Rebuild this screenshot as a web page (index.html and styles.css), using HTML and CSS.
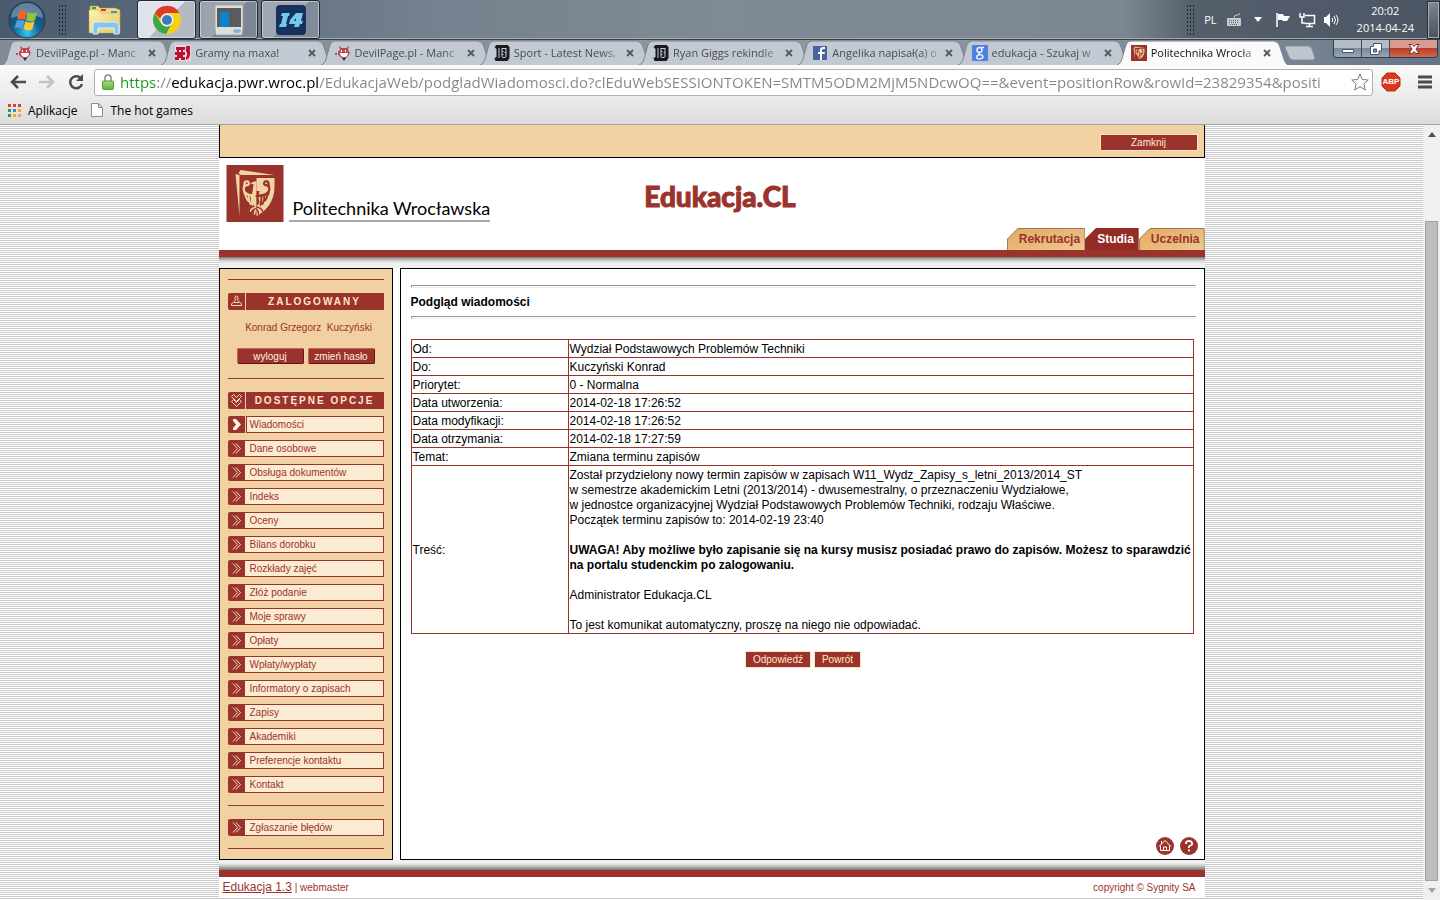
FILE: index.html
```html
<!DOCTYPE html>
<html lang="pl">
<head>
<meta charset="utf-8">
<title>Politechnika Wrocławska</title>
<link rel="stylesheet" href="styles.css">
</head>
<body>
<svg class="defs" aria-hidden="true">
  <defs>
    <linearGradient id="folder" x1="0" y1="0" x2="1" y2="1"><stop offset="0" stop-color="#fdf3b4"/><stop offset="1" stop-color="#e5c76a"/></linearGradient>
    <radialGradient id="orb" cx=".5" cy=".85" r=".8"><stop offset="0" stop-color="#37c8f4"/><stop offset=".45" stop-color="#156395"/><stop offset="1" stop-color="#1d405c"/></radialGradient>
    <linearGradient id="lock" x1="0" y1="0" x2="0" y2="1"><stop offset="0" stop-color="#a5dd80"/><stop offset="1" stop-color="#5fb63c"/></linearGradient>
    <linearGradient id="sand" x1="0" y1="0" x2="1" y2="1"><stop offset="0" stop-color="#e3a863"/><stop offset=".6" stop-color="#eabb7c"/><stop offset="1" stop-color="#efca94"/></linearGradient>
    <g id="wing" fill="none" stroke-linecap="round">
      <path d="M19 21q-2-3 0-4.500 3-1 3.500 2-.5 2-2 1.500" stroke-width="2.200"/>
      <path d="M18 20q-2 5 1 8 4 3 11 3" stroke-width="2.200"/>
      <path d="M17.500 25q0 4 2 6M19 28q0 5 3 8M22 30q0 5 2 9M25 31q0 4 1 9" stroke-width="1.900"/>
      <path d="M30 42q-5 1-6 4M30 44q-2 2-2 5" stroke-width="1.600"/>
    </g>
  </defs>
  <symbol id="tabshape" viewBox="0 0 172 25" preserveAspectRatio="none"><path d="M0 25C3 24 4 22 5 19L9 5Q10 1 14 1H157Q161 1 163 5L168 20Q169 24 172 25" stroke="#7c858e" stroke-width="1"/></symbol>
  <symbol id="devil" viewBox="0 0 16 16"><path d="M5 5L4 1l3 2h4l3-2-1 4q2.500 2 1 5l-3 3-2 2-2-2q-4-2-4-4-.5-3 2-4zM0 8h2v2H0z" fill="#bf4655"/><path d="M5 8h8q0 3-3 4H8Q5 11 5 8M6 5h1v2H6zm4 0h1v2h-1z" fill="#fff"/><path d="M7 13h4l-2 3z" fill="#333"/></symbol>
  <symbol id="gry" viewBox="0 0 16 16"><path d="M0 0h16v16H0z" fill="#f0d5dc"/><path fill-rule="evenodd" d="M1 2h9v3H8v2h2v3H8v2h2v3H6v-2H4v2H0v-3h2v-2H0V7h2V5H1zm3 3v2h2V5zm7-4h4v9l-1 3-3 2v-3l1-1V7h-1z" fill="#ba0f35"/></symbol>
  <symbol id="sport" viewBox="0 0 15 16"><path d="M2 0h11l2 2v11l-2 3H1l-1-3 2-1V4L0 2z" fill="#17191d"/><path d="M4 3h1v10H4zm3 0h5v1H7zm0 1h1v8H7zm4 0h1v8h-1zM8 12h3v1H8zm0-6h1v1H8zm2 1h1v1h-1zM8 9h1v1H8z" fill="#c8ced7"/></symbol>
  <symbol id="crest" viewBox="0 0 57 57"><path d="M0 0h57v57H0z" fill="#9b332d"/><path d="M14 5l34 5H14l-2-2zM9 9l4 1v41z" fill="#f2d4a3"/><path d="M30 13h18v10q-1 19-18 28z" fill="#f2d4a3"/><use href="#wing" stroke="#f2d4a3"/><path d="M30 16l-4 1-2 2h3l-1 8-1 3 1 8 4 6z" fill="#f2d4a3"/><g transform="translate(60 0) scale(-1 1)"><use href="#wing" stroke="#9b332d"/><path d="M30 26h-3l1 6-1 6 3 3z" fill="#9b332d"/></g></symbol>
  <symbol id="cross" viewBox="0 0 8 8"><path d="M1 1l6 6M7 1L1 7" stroke="#55585c" stroke-width="1.800" fill="none"/></symbol>
  <symbol id="chevrons" viewBox="0 0 17 17"><path d="M5 3.500l4.500 5L5 13.500M8 3.500l4.500 5L8 13.500" fill="none" stroke="#f8ddb9"/></symbol>
</svg>

<header class="taskbar">
  <button class="start" aria-label="Start"><svg width="38" height="38" viewBox="0 0 38 38"><circle cx="19" cy="19" r="18" fill="url(#orb)" stroke="#263c50"/><path d="M3 17a16 15 0 0132 0q-15-6-32 0" fill="#9eb4c3" opacity=".55"/><path d="M11 11q4-3 8 0l-2 8q-4-2-8 0z" fill="#f1632b"/><path d="M20 11q4 3 9 0l-2 8q-4 3-9 0z" fill="#91c63e"/><path d="M8.500 20q4-2 8 0l-2 8q-4-3-8 0z" fill="#4da0dc"/><path d="M17.500 20q4 3 9 0l-2 8q-4 3-9 0z" fill="#fac832"/></svg></button>
  <i class="grip"></i>
  <button class="task bare" aria-label="Eksplorator"><svg width="34" height="30" viewBox="0 0 34 30"><path d="M2 1h8l2 2h15l5 2v5H2z" fill="#f2dc83" stroke="#b9983c" stroke-width=".5"/><path d="M4 2h4v2H4z" fill="#21a641"/><path d="M13 4h5v2h-5z" fill="#d53a28"/><path d="M23 6h6v2h-6z" fill="#2d8fe0"/><path d="M1 5h9l3 3h19v20H1z" fill="url(#folder)" stroke="#c3a344" stroke-width=".5"/><path d="M5 29V20q0-3 3-3h19q4 0 4 3v9h-5v-6H10v6z" fill="#83c8ec" stroke="#d8f3ff"/></svg></button>
  <button class="task active" aria-label="Google Chrome"><svg width="30" height="30" viewBox="0 0 30 30"><circle cx="15" cy="15" r="14" fill="#f7cf18"/><path d="M2.900 8A14 14 0 0127.300 8H15a7 7 0 00-6.800 6z" fill="#dc3b2c"/><path d="M2.900 8A14 14 0 0014 29l5-9a7 7 0 01-10.500-2.500z" fill="#3fa648"/><circle cx="15" cy="15" r="6.500" fill="#f3f3f3"/><circle cx="15" cy="15" r="5" fill="#3b7bc6"/></svg></button>
  <button class="task" aria-label="Monitor"><svg width="30" height="32" viewBox="0 0 30 32"><path d="M1 1h28v24l-1 6H2l-1-6z" fill="#dcdfda" stroke="#a1a5a3"/><path d="M3 4h24v19H3z" fill="#5b5b5b"/><path d="M6 8h9v15H6z" fill="#0b83d0"/><ellipse cx="23" cy="27" rx="4" ry="2" fill="#8fb3d1"/></svg></button>
  <button class="task" aria-label="I4"><svg width="30" height="30" viewBox="0 0 30 30"><rect width="30" height="30" rx="4" fill="#17305c"/><path d="M6 8h8l-1 3h-1l-2 8h1l-1 3H3l1-3h1l2-8H5z" fill="#70cbee"/><path fill-rule="evenodd" d="M20 8h7l-2 8h2l-1 3h-2l-1 3h-5l1-3h-6l1-4zm0 5l-2 3h2z" fill="#70cbee"/></svg></button>
  <div class="tray">
    <i class="grip"></i>
    <span class="lang">PL</span>
    <svg width="16" height="16" viewBox="0 0 16 16"><path d="M8 6q0-3 3-3t3-2" stroke="#ccc" fill="none"/><rect x="1" y="6" width="14" height="8" rx="1" fill="#c9cbcd"/><path d="M3 8.500h10M3 10.500h10M4 12.500h8" stroke="#555e69" stroke-dasharray="1 1"/></svg>
    <svg class="down" width="8" height="5" viewBox="0 0 8 5"><path d="M0 0h8L4 5z" fill="#fff"/></svg>
    <svg width="16" height="16" viewBox="0 0 16 16"><path d="M2 1v14" stroke="#fff" stroke-width="1.500"/><path d="M3 2h5l1 2h6l-3 5H8L7 8H3z" fill="#fff"/></svg>
    <svg class="net" width="17" height="16" viewBox="0 0 17 16"><path d="M6 3.500h9.500v8H6M7 14.500h7M10.500 12v2M1 1v4h4V1M3 5v6h3" stroke="#fff" stroke-width="1.500" fill="none"/></svg>
    <svg class="sound" width="16" height="16" viewBox="0 0 16 16"><path d="M1 5h2l4-4v14l-4-4H1z" fill="#fff"/><path d="M9 6q1.500 2 0 4m2-6q3 4 0 8m2-9q4 5 0 10" stroke="#fff" fill="none"/></svg>
    <time class="clock">20:02<br>2014-04-24</time>
    <button class="desktop" aria-label="Pokaż pulpit"></button>
  </div>
</header>

<nav class="tabs" aria-label="Karty">
  <div class="tab"><svg class="shape"><use href="#tabshape"/></svg><svg class="fav"><use href="#devil"/></svg><span>DevilPage.pl - Manc</span><button aria-label="Zamknij kartę"><svg><use href="#cross"/></svg></button></div>
  <div class="tab"><svg class="shape"><use href="#tabshape"/></svg><svg class="fav"><use href="#gry"/></svg><span>Gramy na maxa!</span><button aria-label="Zamknij kartę"><svg><use href="#cross"/></svg></button></div>
  <div class="tab"><svg class="shape"><use href="#tabshape"/></svg><svg class="fav"><use href="#devil"/></svg><span>DevilPage.pl - Manc</span><button aria-label="Zamknij kartę"><svg><use href="#cross"/></svg></button></div>
  <div class="tab"><svg class="shape"><use href="#tabshape"/></svg><svg class="fav"><use href="#sport"/></svg><span>Sport - Latest News,</span><button aria-label="Zamknij kartę"><svg><use href="#cross"/></svg></button></div>
  <div class="tab"><svg class="shape"><use href="#tabshape"/></svg><svg class="fav"><use href="#sport"/></svg><span>Ryan Giggs rekindle</span><button aria-label="Zamknij kartę"><svg><use href="#cross"/></svg></button></div>
  <div class="tab"><svg class="shape"><use href="#tabshape"/></svg><svg class="fav" viewBox="0 0 16 16"><path d="M1 1h14v14H1z" fill="#4862a3"/><path d="M8 15V9H6V7h2V5q0-3 3-3h2v2h-1q-2 0-2 1v2h3l-.5 2H10v6z" fill="#fff"/></svg><span>Angelika napisał(a) o</span><button aria-label="Zamknij kartę"><svg><use href="#cross"/></svg></button></div>
  <div class="tab"><svg class="shape"><use href="#tabshape"/></svg><svg class="fav" viewBox="0 0 16 16"><rect width="16" height="16" rx="1" fill="#4a81e0"/><g fill="none" stroke="#e8effb" stroke-width="1.500"><circle cx="7.500" cy="5" r="2.500"/><path d="M9 2.500h3M8 7.500q-2 1 0 2 3 .5 3 2.300T7.700 14t-3-2T8 9.800"/></g></svg><span>edukacja - Szukaj w</span><button aria-label="Zamknij kartę"><svg><use href="#cross"/></svg></button></div>
  <div class="tab current"><svg class="shape"><use href="#tabshape"/></svg><svg class="fav"><use href="#crest"/></svg><span>Politechnika Wrocła</span><button aria-label="Zamknij kartę"><svg><use href="#cross"/></svg></button></div>
  <div class="tabend">
    <button class="newtab" aria-label="Nowa karta"><svg width="32" height="16" viewBox="0 0 32 16"><path d="M3 1h21q3 0 4 3l3 9q0 2-2 2H9q-3 0-4-3L1 3q0-2 2-2z" fill="#bdc5ce" stroke="#858e98"/></svg></button>
    <div class="wincontrols">
      <button aria-label="Minimalizuj"><svg width="14" height="12" viewBox="0 0 14 12"><path d="M1.500 6.500h11v3h-11z" fill="#fff" stroke="#4d5765"/></svg></button>
      <button aria-label="Przywróć"><svg width="12" height="12" viewBox="0 0 12 12"><path d="M3.500.5h8V8H9v3.500H.5V3.500h3zM3.500 6v3h3V6z" fill="#fff" stroke="#4d5765" fill-rule="evenodd"/></svg></button>
      <button class="close" aria-label="Zamknij okno"><svg width="12" height="10" viewBox="0 0 12 10"><path d="M1 .5h3l2 2 2-2h3L8 5l3 4.500H8l-2-2-2 2H1L4 5z" fill="#fff" stroke="#6b3530"/></svg></button>
    </div>
  </div>
</nav>

<div class="toolbar">
  <button aria-label="Wstecz"><svg width="16" height="14" viewBox="0 0 16 14"><path d="M8 1L2 7l6 6M2 7h14" stroke="#4b4b4b" stroke-width="2.500" fill="none"/></svg></button>
  <button aria-label="Dalej"><svg width="16" height="14" viewBox="0 0 16 14"><path d="M8 1l6 6-6 6M14 7H0" stroke="#c3c3c3" stroke-width="2.500" fill="none"/></svg></button>
  <button aria-label="Odśwież"><svg width="16" height="16" viewBox="0 0 16 16"><path d="M12.500 4A6 6 0 1014 10" stroke="#4b4b4b" stroke-width="2.500" fill="none"/><path d="M15 0v7H8z" fill="#4b4b4b"/></svg></button>
  <div class="omnibox">
    <svg width="12" height="16" viewBox="0 0 12 16"><path d="M3 8V4q0-3 3-3t3 3v4" stroke="#8a8a8a" stroke-width="1.500" fill="none"/><rect x=".5" y="7" width="11" height="8.500" rx="1" fill="url(#lock)" stroke="#4f9a35"/></svg>
    <input type="text" aria-label="Adres" value="https://edukacja.pwr.wroc.pl/EdukacjaWeb/podgladWiadomosci.do?clEduWebSESSIONTOKEN=SMTM5ODM2MjM5NDcwOQ==&amp;event=positionRow&amp;rowId=23829354&amp;positi">
    <button aria-label="Dodaj do zakładek"><svg width="18" height="18" viewBox="0 0 18 18"><path d="M9 1l2.300 5.500 6 .5-4.500 4 1.400 6L9 13.700 3.800 17l1.400-6L.7 7l6-.5z" fill="#fff" stroke="#777"/></svg></button>
  </div>
  <button class="abp" aria-label="Adblock Plus"><svg width="20" height="20" viewBox="0 0 20 20"><path d="M6 1h8l5 5v8l-5 5H6l-5-5V6z" fill="#d93a1c" stroke="#b92c12"/></svg><b>ABP</b></button>
  <button aria-label="Menu"><svg width="14" height="14" viewBox="0 0 14 14"><path d="M0 2h14M0 7h14M0 12h14" stroke="#4b4b4b" stroke-width="3"/></svg></button>
</div>
<nav class="bookmarks" aria-label="Zakładki">
  <a href="#"><svg width="13" height="13" viewBox="0 0 13 13"><path d="M0 0h3v3H0zm5 0h3v3H5zm5 0h3v3h-3z" fill="#e33e2b"/><path d="M0 5h3v3H0z" fill="#2c9c4a"/><path d="M5 5h3v3H5z" fill="#2a84f2"/><path d="M10 5h3v3h-3zm-5 5h3v3H5zm5 0h3v3h-3z" fill="#f3ad13"/><path d="M0 10h3v3H0z" fill="#2c9c4a"/></svg>Aplikacje</a>
  <a href="#"><svg width="12" height="14" viewBox="0 0 12 14"><path d="M.5.5h7l4 4v9H.5zM7.500.5v4h4" fill="#fff" stroke="#8d8d8d"/></svg>The hot games</a>
</nav>

<div class="viewport">
  <div class="canvas">
    <div class="page">
      <div class="topbar"><button class="btn wide">Zamknij</button></div>
      <div class="masthead">
        <div class="logo"><svg width="58" height="57"><use href="#crest"/></svg><span>Politechnika Wrocławska</span></div>
        <h1>Edukacja.CL</h1>
        <nav class="sections" aria-label="Sekcje">
          <a href="#" class="section"><svg viewBox="0 0 80 22" preserveAspectRatio="none"><path d="M.5 22V11L11 .5h68.500V22" fill="url(#sand)" stroke="#9c7c50"/></svg><span>Rekrutacja</span></a>
          <a href="#" class="section on"><svg viewBox="0 0 54 22" preserveAspectRatio="none"><path d="M0 22V11L11 0h43v22" fill="#922c24"/></svg><span>Studia</span></a>
          <a href="#" class="section"><svg viewBox="0 0 66 22" preserveAspectRatio="none"><path d="M.5 22V11L11 .5h54.500V22" fill="url(#sand)" stroke="#9c7c50"/></svg><span>Uczelnia</span></a>
        </nav>
      </div>
      <div class="band"></div>
      <div class="columns">
        <aside class="sidebar">
          <hr>
          <h2><svg viewBox="0 0 17 17"><path d="M8.500 3q1.500 0 1.500 2l-.5 2 4 4v1.500h-10V11l4-4L7 5q0-2 1.500-2zM6 9.500h5" fill="none" stroke="#f8ddb9"/></svg><span>ZALOGOWANY</span></h2>
          <p class="user">Konrad Grzegorz&nbsp; Kuczyński</p>
          <div class="account"><button>wyloguj</button><button>zmień hasło</button></div>
          <hr>
          <h2><svg viewBox="0 0 17 17"><path d="M3.500 4.500l2-2 3 3 3-3 2 2-5 5zM3.500 9.500l2-2 3 3 3-3 2 2-5 5z" fill="none" stroke="#f8ddb9"/></svg><span>DOSTĘPNE OPCJE</span></h2>
          <ul>
            <li><a href="#"><svg viewBox="0 0 17 17"><path d="M5 3h3l5 5.500L8 14H5V12l3-3.500L5 5z" fill="#fff5e8"/></svg><span class="sel">Wiadomości</span></a></li>
            <li><a href="#"><svg><use href="#chevrons"/></svg><span>Dane osobowe</span></a></li>
            <li><a href="#"><svg><use href="#chevrons"/></svg><span>Obsługa dokumentów</span></a></li>
            <li><a href="#"><svg><use href="#chevrons"/></svg><span>Indeks</span></a></li>
            <li><a href="#"><svg><use href="#chevrons"/></svg><span>Oceny</span></a></li>
            <li><a href="#"><svg><use href="#chevrons"/></svg><span>Bilans dorobku</span></a></li>
            <li><a href="#"><svg><use href="#chevrons"/></svg><span>Rozkłady zajęć</span></a></li>
            <li><a href="#"><svg><use href="#chevrons"/></svg><span>Złóż podanie</span></a></li>
            <li><a href="#"><svg><use href="#chevrons"/></svg><span>Moje sprawy</span></a></li>
            <li><a href="#"><svg><use href="#chevrons"/></svg><span>Opłaty</span></a></li>
            <li><a href="#"><svg><use href="#chevrons"/></svg><span>Wpłaty/wypłaty</span></a></li>
            <li><a href="#"><svg><use href="#chevrons"/></svg><span>Informatory o zapisach</span></a></li>
            <li><a href="#"><svg><use href="#chevrons"/></svg><span>Zapisy</span></a></li>
            <li><a href="#"><svg><use href="#chevrons"/></svg><span>Akademiki</span></a></li>
            <li><a href="#"><svg><use href="#chevrons"/></svg><span>Preferencje kontaktu</span></a></li>
            <li><a href="#"><svg><use href="#chevrons"/></svg><span>Kontakt</span></a></li>
          </ul>
          <hr>
          <ul class="report"><li><a href="#"><svg><use href="#chevrons"/></svg><span>Zgłaszanie błędów</span></a></li></ul>
          <hr>
        </aside>
        <main>
          <hr>
          <h2>Podgląd wiadomości</h2>
          <hr>
          <table>
            <tr><th scope="row">Od:</th><td>Wydział Podstawowych Problemów Techniki</td></tr>
            <tr><th scope="row">Do:</th><td>Kuczyński Konrad</td></tr>
            <tr><th scope="row">Priorytet:</th><td>0 - Normalna</td></tr>
            <tr><th scope="row">Data utworzenia:</th><td>2014-02-18 17:26:52</td></tr>
            <tr><th scope="row">Data modyfikacji:</th><td>2014-02-18 17:26:52</td></tr>
            <tr><th scope="row">Data otrzymania:</th><td>2014-02-18 17:27:59</td></tr>
            <tr><th scope="row">Temat:</th><td>Zmiana terminu zapisów</td></tr>
            <tr><th scope="row">Treść:</th><td>Został przydzielony nowy termin zapisów w zapisach W11_Wydz_Zapisy_s_letni_2013/2014_ST<br>w semestrze akademickim Letni (2013/2014) - dwusemestralny, o przeznaczeniu Wydziałowe,<br>w jednostce organizacyjnej Wydział Podstawowych Problemów Techniki, rodzaju Właściwe.<br>Początek terminu zapisów to: 2014-02-19 23:40<br><br><b>UWAGA! Aby możliwe było zapisanie się na kursy musisz posiadać prawo do zapisów. Możesz to sparawdzić<br>na portalu studenckim po zalogowaniu.</b><br><br>Administrator Edukacja.CL<br><br>To jest komunikat automatyczny, proszę na niego nie odpowiadać.</td></tr>
          </table>
          <div class="actions"><button class="btn">Odpowiedź</button><button class="btn">Powrót</button></div>
          <div class="help">
            <a href="#" aria-label="Strona główna"><svg width="18" height="18" viewBox="0 0 18 18"><circle cx="9" cy="9" r="9" fill="#9b332d"/><path d="M3 9.500l6-6 6 6M4.500 8.500V13.500h9V8.500M5.500 7V4M7.500 13v-3h3v3" fill="none" stroke="#fff"/></svg></a>
            <a href="#" aria-label="Pomoc"><svg width="18" height="18" viewBox="0 0 18 18"><circle cx="9" cy="9" r="9" fill="#9b332d"/><path d="M6 7V5.500Q6.500 4 9 4t3 2-1.500 2.500T9 11M9 12.500v2" fill="none" stroke="#fff" stroke-width="1.800"/></svg></a>
          </div>
        </main>
      </div>
      <div class="band lower"></div>
      <footer><span><a href="#">Edukacja 1.3</a> | webmaster</span><span>copyright © Sygnity SA</span></footer>
    </div>
  </div>
  <div class="scrollbar" aria-hidden="true"><svg width="8" height="5" viewBox="0 0 8 5"><path d="M4 0l4 5H0z" fill="#505050"/></svg><i></i><svg width="8" height="5" viewBox="0 0 8 5"><path d="M4 5l4-5H0z" fill="#a3a3a3"/></svg></div>
</div>
</body>
</html>
```
FILE: styles.css
```css
* { box-sizing: border-box; }
body {
  margin: 0;
  min-height: 100vh;
  display: flex;
  flex-direction: column;
  font-family: "Liberation Sans", Arial, sans-serif;
  font-size: 12px;
  line-height: 15px;
  color: #000;
}
button { border: 0; padding: 0; margin: 0; background: none; font: inherit; color: inherit; display: flex; align-items: center; justify-content: center; }
svg { display: block; flex: none; }
a { color: inherit; text-decoration: none; }
ul { list-style: none; margin: 0; padding: 0; }
.defs { position: absolute; width: 0; height: 0; }

/* Taskbar */
.taskbar {
  height: 40px;
  display: flex;
  align-items: center;
  padding-left: 8px;
  border-bottom: 1px solid #3a4249;
  box-shadow: inset 0 -1px #a4abab;
  background: linear-gradient(90deg, #4c5a6d 0, #5d6c80 14%, #75818e 30%, #7f8a94 50%, #7d8791 78%, #555f6c 83%, #4b5564 100%);
  font-family: "Open Sans", "Noto Sans", sans-serif;
  color: #fff;
}
.start { margin-right: 12px; }
.grip { width: 9px; height: 31px; background: radial-gradient(circle, #1c242d 1px, transparent 1px) 0 0 / 3px 4px; }
.task { width: 59px; height: 39px; margin-right: 3px; border: 1px solid #1f2831; border-radius: 3px; box-shadow: inset 0 0 0 1px #ffffff70; background: linear-gradient(135deg, #ffffff60 50%, #ffffff28 51%); }
.task.active { background: linear-gradient(135deg, #dfe2e8 50%, #b4bac4 51%); }
.task.bare { border: 0; box-shadow: none; background: none; width: 54px; margin: 0 5px 0 11px; }
.tray { margin-left: auto; display: flex; align-items: center; height: 100%; }
.lang { margin: 0 9px; font-size: 11px; }
.down { margin: 0 13px 0 12px; }
.net { margin-left: 8px; }
.sound { margin: 0 18px 0 7px; }
.clock { text-align: center; line-height: 17px; font-size: 11px; padding-bottom: 2px; }
.desktop { width: 13px; height: 38px; margin-left: 13px; border: 1px solid #252d36; box-shadow: inset 0 0 0 1px #a5adb6; background: linear-gradient(160deg, #7f8994, #46505c); }

/* Tab strip */
.tabs { height: 25px; display: flex; padding-left: 8px; background: linear-gradient(90deg, #828c96, #8e979e 60%, #7f8b98 85%, #637487); font-family: "Open Sans", "Noto Sans", sans-serif; font-size: 11px; color: #494c50; }
.tab { flex: 1 1 0; min-width: 0; position: relative; display: flex; align-items: center; padding: 0 11px 0 8px; }
.tab .shape { position: absolute; inset: 0 auto auto -6px; width: calc(100% + 12px); height: 25px; fill: #c3c9d3; }
.tab.current { color: #111; }
.tab.current .shape { fill: #fafafa; }
.fav { position: relative; width: 16px; height: 16px; margin-right: 4px; }
.tab span { position: relative; flex: 1; min-width: 0; overflow: hidden; white-space: nowrap; -webkit-mask-image: linear-gradient(90deg, #000 80%, #0003); mask-image: linear-gradient(90deg, #000 80%, #0003); }
.tab button { position: relative; margin-left: 3px; }
.tab button svg { width: 8px; height: 8px; }
.tabend { width: 158px; display: flex; justify-content: space-between; align-items: flex-start; }
.newtab { margin: 5px 0 0 2px; }
.wincontrols { display: flex; height: 18px; border: 1px solid #333d49; border-top: 0; border-radius: 0 0 4px 4px; overflow: hidden; margin-right: 2px; }
.wincontrols button { width: 28px; border-right: 1px solid #424c58; background: linear-gradient(#b3bdc9 45%, #77869a 46%, #98a6b6); }
.wincontrols .close { width: 47px; border: 0; background: linear-gradient(#d99a90 45%, #b93923 46%, #cd6a50); }

/* Toolbar and bookmarks */
.toolbar { height: 34px; display: flex; align-items: center; gap: 13px; padding: 0 8px 0 10px; background: linear-gradient(#fafafa, #eaeaea); }
.omnibox { flex: 1; min-width: 0; height: 27px; display: flex; align-items: center; padding: 0 3px 0 7px; margin-left: -3px; border: 1px solid #b0b0b0; border-radius: 3px; background: #fff; }
.omnibox input {
  flex: 1;
  min-width: 0;
  border: 0;
  outline: 0;
  padding: 0;
  margin: 0 3px 0 6px;
  font: 15px/22px "Open Sans", "Noto Sans", sans-serif;
  color: transparent;
  background: linear-gradient(90deg, #159a15 0 36px, #858585 36px 51px, #000 51px 199px, #858585 199px);
  -webkit-background-clip: text;
  background-clip: text;
}
.abp { position: relative; margin: 0 4px 0 -5px; }
.abp b { position: absolute; font-size: 8px; line-height: 10px; color: #fff; }
.bookmarks { height: 26px; display: flex; align-items: center; gap: 14px; padding: 0 8px 3px; background: linear-gradient(#eaeaea, #dcdcdc); border-bottom: 1px solid #a3a3a3; font-family: "Open Sans", "Noto Sans", sans-serif; font-size: 12px; }
.bookmarks a { display: flex; align-items: center; gap: 7px; }

/* Web page */
.viewport { flex: 1; display: flex; }
.canvas { flex: 1; display: flex; justify-content: center; background: repeating-linear-gradient(#fff 0 1px, #c9c9c9 1px 2px); }
.page { width: 986px; max-width: 100%; align-self: flex-start; background: #fff; }
.topbar { display: flex; justify-content: flex-end; padding: 9px 6px 6px; border: 1px solid #000; border-top: 0; background: #f1d0a1; }
.btn { height: 17px; padding: 0 7px; border: 1px solid #fbe3c0; background: #9b332d; color: #ffe9cd; font-size: 10px; line-height: 15px; }
.btn.wide { width: 98px; }
.masthead { height: 92px; display: grid; grid-template-columns: 1fr auto 1fr; padding-left: 7px; }
.logo { display: flex; align-items: flex-start; gap: 5px; padding-top: 7px; }
.logo span { margin-top: 32px; padding-left: 4px; border-bottom: 2px solid #aaa; font: 18px/23px Lato, sans-serif; white-space: nowrap; }
h1 { margin: 22px 0 0; padding-left: 10px; font: 900 28px/32px Lato, sans-serif; color: #9b332d; -webkit-text-stroke: 1px #9b332d; }
.sections { display: flex; justify-content: flex-end; align-items: flex-end; font-weight: bold; color: #9b332d; }
.section { position: relative; height: 22px; padding: 4px 5px 0 12px; }
.section svg { position: absolute; inset: 0; width: 100%; height: 100%; }
.section span { position: relative; }
.section.on { color: #fff; }
.band { height: 18px; background: linear-gradient(#9b332d 0 7px, #777 7px, #c4c4c4 10px, #f0f0f0 13px); }
.band.lower { height: 17px; background: linear-gradient(#f0f0f0 3px, #c4c4c4 6px, #777 10px, #9b332d 10px); }
.columns { display: flex; gap: 7px; }
.sidebar { width: 174px; border: 1px solid #000; background: #f1d0a1; padding: 10px 8px; font-size: 10px; color: #9b332d; }
.sidebar hr { border: 0; height: 1px; margin: 0; background: #9b332d; }
.sidebar h2 { display: flex; gap: 1px; margin: 13px 0 0; font-size: 10px; line-height: 17px; color: #fbe6c8; }
.sidebar h2 svg, .sidebar li svg { width: 17px; height: 17px; background: #9b332d; border-radius: 2px 0 0 2px; }
.sidebar h2 span { flex: 1; background: #9b332d; text-align: center; letter-spacing: 2px; }
.user { margin: 10px 0 13px; padding-left: 6px; text-align: center; }
.account { display: flex; justify-content: center; gap: 4px; margin-bottom: 14px; }
.account button { width: 67px; height: 16px; border: 1px solid; border-color: #bd6254 #64150f #64150f #bd6254; border-radius: 2px; background: #9b332d; color: #fff0dc; }
.sidebar ul { display: grid; gap: 7px; margin: 7px 0 12px; }
.sidebar li a { display: flex; }
.sidebar li span { flex: 1; border: 1px solid #9b332d; border-left: 0; background: #fcebd3; padding-left: 5px; line-height: 15px; }
.sidebar li .sel { margin-left: 1px; border-left: 1px solid #9b332d; padding-left: 3px; }
.sidebar .report { margin: 13px 0 12px; }
main { flex: 1; min-width: 0; border: 1px solid #000; padding: 16px 8px 4px 10px; display: flex; flex-direction: column; }
main hr { width: 100%; height: 3px; margin: 0; border: 1px solid #eee; border-top-color: #999; border-left-color: #999; }
main h2 { margin: 7px 0 6px; font-size: 12px; line-height: 15px; }
table { width: calc(100% - 2px); margin-top: 20px; border-collapse: collapse; }
th, td { border: 1px solid #9b332d; padding: 2px 1px 0; text-align: left; font-weight: normal; }
th { width: 157px; }
.actions { display: flex; justify-content: center; gap: 3px; margin-top: 17px; }
.help { display: flex; justify-content: flex-end; gap: 6px; margin: auto -2px 0 0; }
footer { height: 21px; display: flex; align-items: center; justify-content: space-between; padding: 0 9px 0 4px; font-size: 10px; color: #9b332d; }
footer a { font-size: 12px; text-decoration: underline; }
.scrollbar { width: 17px; display: flex; flex-direction: column; align-items: center; padding: 7px 0; background: #f0f0f0; }
.scrollbar i { width: 13px; flex: 1; margin: 84px 0 7px; border: 1px solid #a3a3a3; background: #bdbdbd; }
```
